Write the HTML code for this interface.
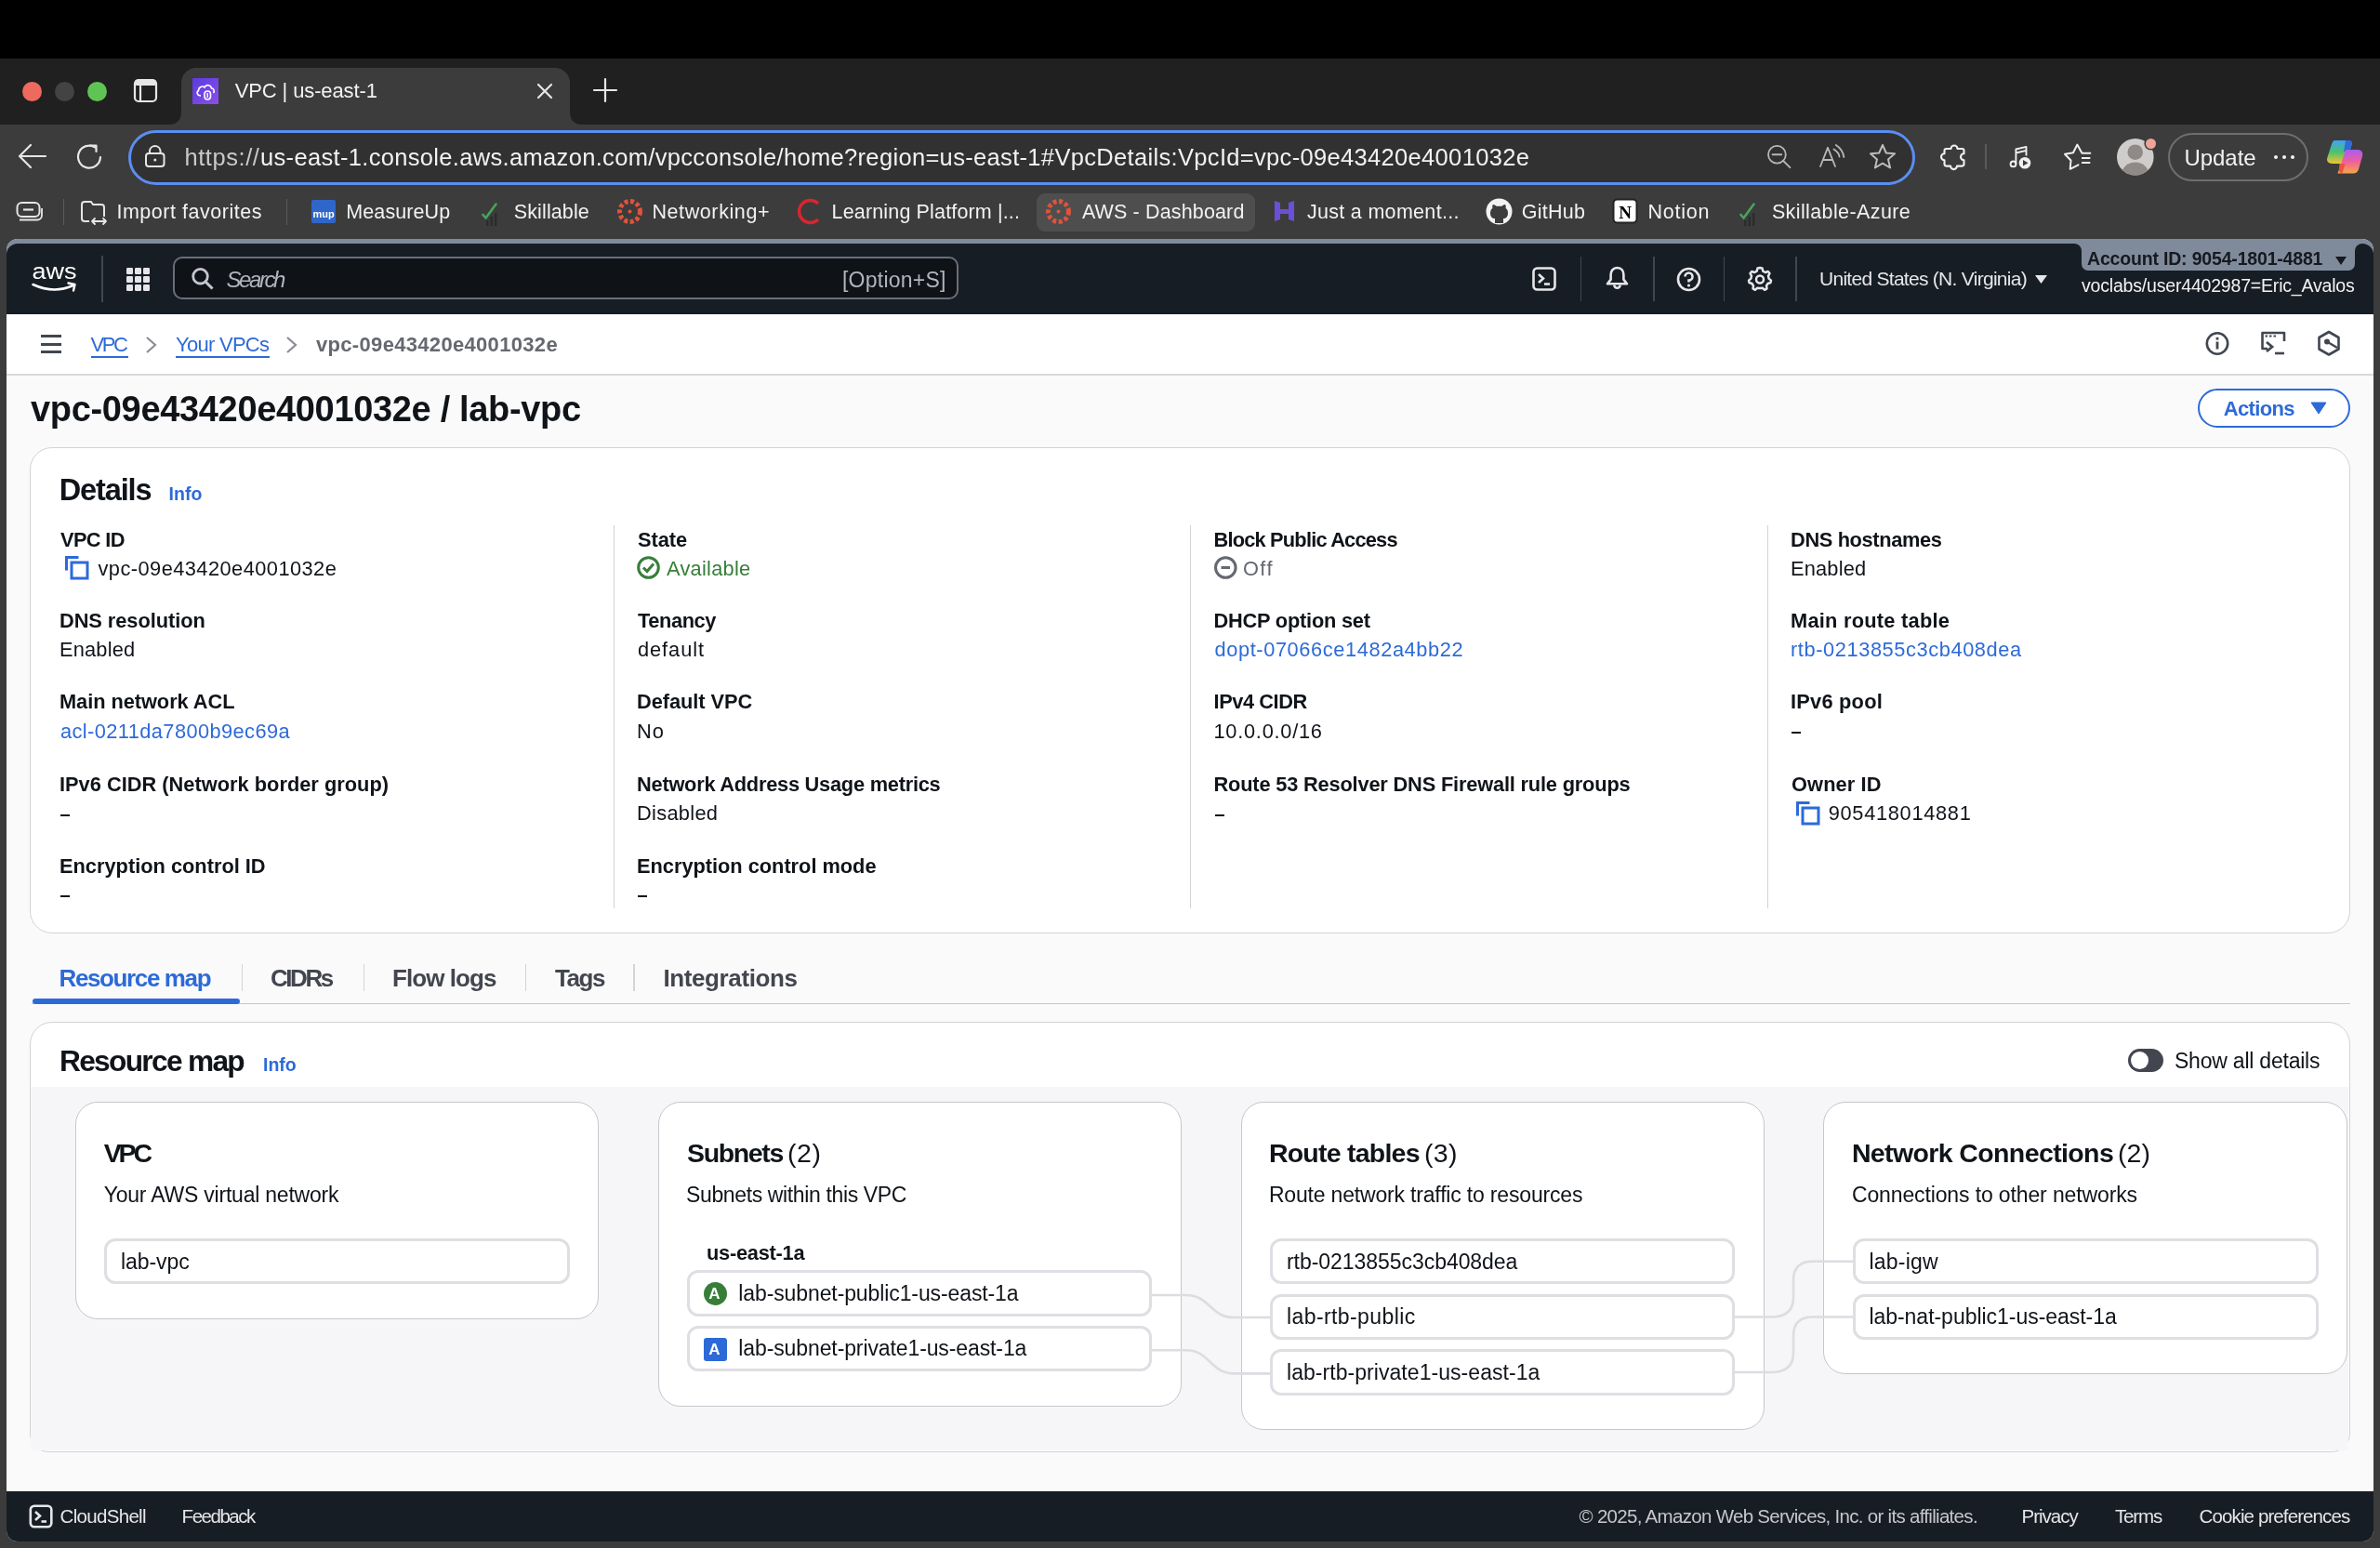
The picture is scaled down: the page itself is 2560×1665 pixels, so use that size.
<!DOCTYPE html>
<html><head><meta charset="utf-8"><title>VPC | us-east-1</title>
<style>
html,body{margin:0;padding:0;width:2560px;height:1665px;overflow:hidden;background:#3c3c3c;font-family:"Liberation Sans",sans-serif;}
svg{overflow:visible}
</style></head><body>
<div style="position:absolute;left:0;top:0;width:2560px;height:1665px;overflow:hidden;will-change:transform">
<div style="position:absolute;left:0.00px;top:0.00px;width:2560.00px;height:63.00px;background:#000"></div>
<div style="position:absolute;left:0.00px;top:63.00px;width:2560.00px;height:71.00px;background:#202020"></div>
<div style="position:absolute;left:0.00px;top:134.00px;width:2560.00px;height:1531.00px;background:#3c3c3c"></div>
<div style="position:absolute;left:195.00px;top:73.00px;width:418.00px;height:61.00px;background:#3c3c3c;border-radius:16px 16px 0 0"></div>
<svg style="position:absolute;left:181px;top:120px" width="14" height="14"><path d="M0 14 Q14 14 14 0 L14 14 Z" fill="#3c3c3c"/></svg>
<svg style="position:absolute;left:613px;top:120px" width="14" height="14"><path d="M14 14 Q0 14 0 0 L0 14 Z" fill="#3c3c3c"/></svg>
<div style="position:absolute;left:24.10px;top:87.80px;width:21.20px;height:21.20px;background:#ee6a5f;border-radius:50%"></div>
<div style="position:absolute;left:58.90px;top:87.80px;width:21.20px;height:21.20px;background:#434343;border-radius:50%"></div>
<div style="position:absolute;left:93.70px;top:87.80px;width:21.20px;height:21.20px;background:#5fc454;border-radius:50%"></div>
<svg style="position:absolute;left:143.00px;top:84.00px;" width="28" height="28" viewBox="0 0 28 28"><rect x="2" y="2" width="23" height="23" rx="4" fill="none" stroke="#e6e6e6" stroke-width="2.2"/><rect x="2" y="2" width="23" height="6" rx="2" fill="#e6e6e6"/><line x1="8" y1="8" x2="8" y2="25" stroke="#e6e6e6" stroke-width="2.2"/></svg>
<svg style="position:absolute;left:207.00px;top:84.00px;" width="28" height="28" viewBox="0 0 28 28"><defs><linearGradient id="fg" x1="0" y1="0" x2="1" y2="1"><stop offset="0" stop-color="#5a3be0"/><stop offset="1" stop-color="#8a4fe8"/></linearGradient></defs><rect width="28" height="28" fill="url(#fg)"/><path d="M9 19 C5 19 4 15 6.5 13.5 C6.5 9.5 11 8 13 10 C14.5 6.5 20 7 20.5 11 C23 11 24 14 22.5 16" fill="none" stroke="#fff" stroke-width="1.6"/><rect x="13" y="14" width="6.5" height="9" rx="3.2" fill="none" stroke="#fff" stroke-width="1.6"/><line x1="16.2" y1="16" x2="16.2" y2="21" stroke="#fff" stroke-width="1.4"/></svg>
<span style="position:absolute;left:252.70px;top:87px;font-size:22px;line-height:22px;color:#f2f2f2;white-space:pre;letter-spacing:-0.118px;">VPC | us-east-1</span>
<svg style="position:absolute;left:576.00px;top:88.00px;" width="20" height="20" viewBox="0 0 20 20"><path d="M3 3 L17 17 M17 3 L3 17" stroke="#e6e6e6" stroke-width="2.2" stroke-linecap="round"/></svg>
<svg style="position:absolute;left:638.00px;top:84.00px;" width="26" height="26" viewBox="0 0 26 26"><path d="M13 1 V25 M1 13 H25" stroke="#e6e6e6" stroke-width="2.2" stroke-linecap="round"/></svg>
<svg style="position:absolute;left:19.00px;top:154.00px;" width="32" height="28" viewBox="0 0 32 28"><path d="M30 14 H3 M14 2 L2 14 L14 26" fill="none" stroke="#e6e6e6" stroke-width="2.2" stroke-linecap="round" stroke-linejoin="round"/></svg>
<svg style="position:absolute;left:82.00px;top:154.00px;" width="32" height="32" viewBox="0 0 32 32"><path d="M26 15 A12 12 0 1 1 20.5 4.5" fill="none" stroke="#e6e6e6" stroke-width="2.2" stroke-linecap="round"/><path d="M15 2.5 H21.5 V9" fill="none" stroke="#e6e6e6" stroke-width="2.2" stroke-linecap="round" stroke-linejoin="round"/></svg>
<div style="position:absolute;left:138.00px;top:139.50px;width:1922.00px;height:59.00px;box-sizing:border-box;border:3.5px solid #5b8ef0;border-radius:30px;background:#313131"></div>
<svg style="position:absolute;left:155.00px;top:155.00px;" width="24" height="26" viewBox="0 0 24 26"><rect x="2" y="10" width="19.5" height="14" rx="3" fill="none" stroke="#e6e6e6" stroke-width="2"/><path d="M6 10 V7 A5.8 5.8 0 0 1 17.5 7 V10" fill="none" stroke="#e6e6e6" stroke-width="2"/><circle cx="11.8" cy="17" r="1.5" fill="#e6e6e6"/></svg>
<span style="position:absolute;left:198.50px;top:157px;font-size:25.5px;line-height:25.5px;color:#c9c9c9;white-space:pre;letter-spacing:0.550px;">https://</span>
<span style="position:absolute;left:280.00px;top:157px;font-size:25.5px;line-height:25.5px;color:#f2f2f2;white-space:pre;letter-spacing:0.328px;">us-east-1.console.aws.amazon.com/vpcconsole/home?region=us-east-1#VpcDetails:VpcId=vpc-09e43420e4001032e</span>
<svg style="position:absolute;left:1898.00px;top:153.00px;" width="30" height="30" viewBox="0 0 30 30"><circle cx="13.4" cy="13.2" r="9.4" fill="none" stroke="#b8b8b8" stroke-width="1.8"/><path d="M8.6 13.2 H18.2 M20 19.8 L27.4 27.2" stroke="#b8b8b8" stroke-width="1.9" stroke-linecap="round"/></svg>
<svg style="position:absolute;left:1950.00px;top:150.00px;" width="40" height="36" viewBox="0 0 40 36"><path d="M8 29 L16 8.8 L24 29 M11 22 H21" fill="none" stroke="#b8b8b8" stroke-width="1.8" stroke-linecap="round" stroke-linejoin="round"/><path d="M22.5 10.5 Q28 14 28.5 18.5 M24.8 6 Q32.5 11 33.3 19" fill="none" stroke="#b8b8b8" stroke-width="1.8" stroke-linecap="round"/></svg>
<svg style="position:absolute;left:2010.00px;top:154.00px;" width="30" height="30" viewBox="0 0 30 30"><path d="M15 2 L18.8 10.5 L28 11.3 L21 17.4 L23.1 26.5 L15 21.7 L6.9 26.5 L9 17.4 L2 11.3 L11.2 10.5 Z" fill="none" stroke="#bdbdbd" stroke-width="2" stroke-linejoin="round"/></svg>
<svg style="position:absolute;left:2086.00px;top:153.00px;" width="32" height="32" viewBox="0 0 32 32"><path d="M5.5 9 Q5.5 7 7.5 7 H12.5 A3.5 3.5 0 0 1 19.5 7 H24.5 Q26.5 7 26.5 9 V12.3 A3.5 3.5 0 0 0 26.5 19.3 V23.6 Q26.5 25.6 24.5 25.6 H19 A3.5 3.5 0 0 1 12 25.6 H7.5 Q5.5 25.6 5.5 23.6 V19.3 A3.5 3.5 0 0 1 5.5 12.3 Z" fill="none" stroke="#f0f0f0" stroke-width="2.1" stroke-linejoin="round"/></svg>
<div style="position:absolute;left:2135.00px;top:155.00px;width:2.00px;height:27.00px;background:#5a5a5a"></div>
<svg style="position:absolute;left:2158.00px;top:153.00px;" width="32" height="32" viewBox="0 0 32 32"><circle cx="7.5" cy="23.4" r="2.9" fill="none" stroke="#f0f0f0" stroke-width="1.9"/><path d="M10.4 23.4 V7.5 L21.5 4.9 V14.5 M10.4 11.5 L21.5 8.9" fill="none" stroke="#f0f0f0" stroke-width="1.9" stroke-linejoin="round"/><circle cx="20" cy="22.3" r="6.3" fill="#f0f0f0"/><path d="M18 19 V25.6 L23.5 22.3 Z" fill="#3c3c3c"/></svg>
<svg style="position:absolute;left:2218.00px;top:153.00px;" width="34" height="32" viewBox="0 0 34 32"><path d="M30.3 11.7 H21.5 L16.3 2.6 L12 11.2 L3 12.8 L9.5 19.5 L8.7 28.8 L17.5 24.3" fill="none" stroke="#f0f0f0" stroke-width="2" stroke-linejoin="round" stroke-linecap="round"/><path d="M21 17 H30.3 M21 21.9 H30.3" stroke="#f0f0f0" stroke-width="2"/></svg>
<svg style="position:absolute;left:2277.30px;top:149.10px;" width="40" height="40" viewBox="0 0 40 40"><defs><clipPath id="avc"><circle cx="19.8" cy="19.8" r="19.8"/></clipPath></defs><circle cx="19.8" cy="19.8" r="19.8" fill="#cfcdcb"/><g clip-path="url(#avc)"><circle cx="19.7" cy="14.7" r="8.3" fill="#8f8a87"/><ellipse cx="19.7" cy="38" rx="14.5" ry="12.5" fill="#8f8a87"/></g></svg>
<div style="position:absolute;left:2307.80px;top:148.90px;width:11.00px;height:11.00px;background:#f0a39b;border-radius:50%;box-shadow:0 0 0 1.6px #3c3c3c"></div>
<div style="position:absolute;left:2332.10px;top:143.00px;width:150.90px;height:51.60px;box-sizing:border-box;border:2px solid #6e6e6e;border-radius:26px"></div>
<span style="position:absolute;left:2349.40px;top:158px;font-size:24px;line-height:24px;color:#f2f2f2;white-space:pre;letter-spacing:-0.029px;">Update</span>
<div style="position:absolute;left:2445.60px;top:166.60px;width:4.60px;height:4.60px;background:#f2f2f2;border-radius:50%"></div>
<div style="position:absolute;left:2454.80px;top:166.60px;width:4.60px;height:4.60px;background:#f2f2f2;border-radius:50%"></div>
<div style="position:absolute;left:2463.80px;top:166.60px;width:4.60px;height:4.60px;background:#f2f2f2;border-radius:50%"></div>
<svg style="position:absolute;left:2501.00px;top:150.00px;" width="42" height="38" viewBox="0 0 42 38"><defs><linearGradient id="cpa" x1="0" y1="0" x2="0" y2="1"><stop offset="0" stop-color="#3fa2f6"/><stop offset="0.5" stop-color="#4cc26c"/><stop offset="1" stop-color="#f5c431"/></linearGradient><linearGradient id="cpb" x1="0" y1="0" x2="0" y2="1"><stop offset="0" stop-color="#a85cf2"/><stop offset="0.5" stop-color="#ef5f9c"/><stop offset="1" stop-color="#f7a744"/></linearGradient></defs><path d="M10 1 H25 C28 1 29.5 3 28.5 6 L22 26 H8 C3 26 1 23 2.5 19 L7 5 C8 2.5 9 1 10 1 Z" fill="url(#cpa)"/><path d="M22 1 H25 C28 1 29.5 3 28.5 6 L26 13 H20 Z" fill="#2c5fde" opacity="0.85"/><path d="M14 36.5 H30 C33 36.5 35 35 36 32 L40 18 C41 14 39 11 35 11 H22 L15.5 31 C14.5 34 13 36.5 14 36.5 Z" fill="url(#cpb)"/><path d="M15.5 26 H21.5 L18.5 36.3 C16.5 36.5 14.8 35 14.8 32 Z" fill="#e8553a"/></svg>
<svg style="position:absolute;left:17.00px;top:216.00px;" width="30" height="24" viewBox="0 0 30 24"><rect x="1.5" y="2" width="24" height="15" rx="5" fill="none" stroke="#e6e6e6" stroke-width="2"/><path d="M8 9.5 H19" stroke="#e6e6e6" stroke-width="2.2"/><path d="M4 20.5 H23 A5 5 0 0 0 28 15.5 V8" fill="none" stroke="#e6e6e6" stroke-width="1.8"/></svg>
<div style="position:absolute;left:67.50px;top:214.00px;width:1.50px;height:28.00px;background:#5a5a5a"></div>
<svg style="position:absolute;left:86.00px;top:213.00px;" width="32" height="30" viewBox="0 0 32 30"><path d="M2 7 V22 A3 3 0 0 0 5 25 H10 M26 20 V10 A3 3 0 0 0 23 7 H14 L12 4 H5 A3 3 0 0 0 2 7" fill="none" stroke="#e6e6e6" stroke-width="2" stroke-linejoin="round"/><path d="M13 25 H28 M16 22 L13 25 L16 28 M25 22 L28 25 L25 28" fill="none" stroke="#e6e6e6" stroke-width="1.8" stroke-linecap="round" stroke-linejoin="round"/></svg>
<span style="position:absolute;left:125.40px;top:218px;font-size:21.5px;line-height:21.5px;color:#f2f2f2;white-space:pre;letter-spacing:0.533px;">Import favorites</span>
<div style="position:absolute;left:307.70px;top:214.00px;width:1.50px;height:28.00px;background:#5a5a5a"></div>
<svg style="position:absolute;left:335.00px;top:215.00px;" width="26" height="25" viewBox="0 0 26 25"><rect width="26" height="25" rx="2" fill="#2f66c9"/><text x="13" y="19" font-family="Liberation Sans" font-size="11" font-weight="bold" fill="#fff" text-anchor="middle">mup</text></svg>
<span style="position:absolute;left:372.30px;top:218px;font-size:21.5px;line-height:21.5px;color:#f2f2f2;white-space:pre;letter-spacing:0.091px;">MeasureUp</span>
<svg style="position:absolute;left:517.00px;top:216.00px;" width="22" height="28" viewBox="0 0 22 28"><path d="M2.5 15 L5.5 18.5 L16.5 3.5" fill="none" stroke="#4aa35c" stroke-width="2.6" stroke-linecap="round" stroke-linejoin="round"/><rect x="6" y="21" width="2.5" height="6" fill="#2c2c2c"/><rect x="10.5" y="17" width="2.5" height="10" fill="#2c2c2c"/><rect x="15" y="13" width="2.5" height="14" fill="#2c2c2c"/></svg>
<span style="position:absolute;left:552.80px;top:218px;font-size:21.5px;line-height:21.5px;color:#f2f2f2;white-space:pre;letter-spacing:0.111px;">Skillable</span>
<svg style="position:absolute;left:663.00px;top:213.00px;" width="29" height="29" viewBox="0 0 29 29"><circle cx="14.5" cy="14.5" r="11" fill="none" stroke="#e0533b" stroke-width="5" stroke-dasharray="4 2.5"/><circle cx="14.5" cy="14.5" r="2" fill="#e0533b"/></svg>
<span style="position:absolute;left:701.40px;top:218px;font-size:21.5px;line-height:21.5px;color:#f2f2f2;white-space:pre;letter-spacing:0.606px;">Networking+</span>
<svg style="position:absolute;left:856.00px;top:213.00px;" width="29" height="29" viewBox="0 0 29 29"><path d="M24 6 A12 12 0 1 0 24 23" fill="none" stroke="#d8262f" stroke-width="3.4"/></svg>
<span style="position:absolute;left:894.60px;top:218px;font-size:21.5px;line-height:21.5px;color:#f2f2f2;white-space:pre;letter-spacing:0.152px;">Learning Platform |...</span>
<div style="position:absolute;left:1114.70px;top:207.60px;width:235.30px;height:41.20px;background:#4e4e4e;border-radius:9px"></div>
<svg style="position:absolute;left:1124.00px;top:213.00px;" width="29" height="29" viewBox="0 0 29 29"><circle cx="14.5" cy="14.5" r="11" fill="none" stroke="#e0533b" stroke-width="5" stroke-dasharray="4 2.5"/><circle cx="14.5" cy="14.5" r="2" fill="#e0533b"/></svg>
<span style="position:absolute;left:1163.90px;top:218px;font-size:21.5px;line-height:21.5px;color:#f2f2f2;white-space:pre;letter-spacing:0.143px;">AWS - Dashboard</span>
<svg style="position:absolute;left:1369.00px;top:214.00px;" width="25" height="26" viewBox="0 0 25 26"><path d="M2 2 L8 4 V11 L17 11 V4 L23 2 V24 L17 22 V16 L8 16 V22 L2 24 Z" fill="#6b4fd8"/></svg>
<span style="position:absolute;left:1405.90px;top:218px;font-size:21.5px;line-height:21.5px;color:#f2f2f2;white-space:pre;letter-spacing:0.310px;">Just a moment...</span>
<svg style="position:absolute;left:1598.00px;top:213.00px;" width="29" height="29" viewBox="0 0 29 29"><circle cx="14.5" cy="14.5" r="14" fill="#f2f2f2"/><path d="M10 27 V22 C7 22 5 20 5 16 C5 13 6.5 11.5 7.5 11 C7 9.5 7.2 8 8 7 C9.5 7 11 8 12 9 C13.5 8.6 15.5 8.6 17 9 C18 8 19.5 7 21 7 C21.8 8 22 9.5 21.5 11 C22.5 11.5 24 13 24 16 C24 20 22 22 19 22 V27 Z" fill="#3c3c3c"/></svg>
<span style="position:absolute;left:1636.80px;top:218px;font-size:21.5px;line-height:21.5px;color:#f2f2f2;white-space:pre;letter-spacing:0.249px;">GitHub</span>
<svg style="position:absolute;left:1734.00px;top:213.00px;" width="28" height="28" viewBox="0 0 28 28"><rect x="1.5" y="1.5" width="25" height="25" rx="4" fill="#fff" stroke="#222" stroke-width="2"/><text x="14" y="22" font-family="Liberation Serif" font-size="19" font-weight="bold" fill="#000" text-anchor="middle">N</text></svg>
<span style="position:absolute;left:1772.50px;top:218px;font-size:21.5px;line-height:21.5px;color:#f2f2f2;white-space:pre;letter-spacing:0.742px;">Notion</span>
<svg style="position:absolute;left:1870.00px;top:216.00px;" width="22" height="28" viewBox="0 0 22 28"><path d="M2.5 15 L5.5 18.5 L16.5 3.5" fill="none" stroke="#4aa35c" stroke-width="2.6" stroke-linecap="round" stroke-linejoin="round"/><rect x="6" y="21" width="2.5" height="6" fill="#2c2c2c"/><rect x="10.5" y="17" width="2.5" height="10" fill="#2c2c2c"/><rect x="15" y="13" width="2.5" height="14" fill="#2c2c2c"/></svg>
<span style="position:absolute;left:1905.90px;top:218px;font-size:21.5px;line-height:21.5px;color:#f2f2f2;white-space:pre;letter-spacing:0.390px;">Skillable-Azure</span>
<div style="position:absolute;left:7.00px;top:257.00px;width:2546.00px;height:1401.00px;background:#fafafa;border-radius:12px;overflow:hidden"></div>
<div style="position:absolute;left:7.00px;top:257.00px;width:2546.00px;height:23.00px;background:#7f8b9a;border-radius:12px 12px 0 0"></div>
<div style="position:absolute;left:7.00px;top:262.00px;width:2232.00px;height:76.00px;background:#171d25;border-radius:12px 8px 0 0"></div>
<div style="position:absolute;left:2533.00px;top:262.00px;width:20.00px;height:76.00px;background:#171d25;border-radius:8px 12px 0 0"></div>
<div style="position:absolute;left:2232.00px;top:280.00px;width:307.00px;height:58.00px;background:#171d25"></div>
<div style="position:absolute;left:2238.60px;top:257.00px;width:294.30px;height:34.00px;background:#7f8b9a;border-radius:0 0 7px 7px"></div>
<svg style="position:absolute;left:33.00px;top:282.00px;" width="52" height="36" viewBox="0 0 52 36"><text x="1.5" y="17.5" font-family="Liberation Sans" font-size="24.5" fill="#fff" textLength="48" lengthAdjust="spacingAndGlyphs">aws</text><path d="M2.5 24 Q25 34.5 45.5 25" fill="none" stroke="#fff" stroke-width="2.6" stroke-linecap="round"/><path d="M40.5 22.5 L47.5 24 L46 30.5" fill="none" stroke="#fff" stroke-width="2.4" stroke-linecap="round" stroke-linejoin="round"/></svg>
<div style="position:absolute;left:109.00px;top:275.40px;width:1.50px;height:49.40px;background:#414750"></div>
<svg style="position:absolute;left:135.00px;top:287.00px;" width="26" height="26" viewBox="0 0 26 26"><rect x="1" y="1" width="7" height="7" rx="1.2" fill="#e6e6ea"/><rect x="1" y="10" width="7" height="7" rx="1.2" fill="#e6e6ea"/><rect x="1" y="19" width="7" height="7" rx="1.2" fill="#e6e6ea"/><rect x="10" y="1" width="7" height="7" rx="1.2" fill="#e6e6ea"/><rect x="10" y="10" width="7" height="7" rx="1.2" fill="#e6e6ea"/><rect x="10" y="19" width="7" height="7" rx="1.2" fill="#e6e6ea"/><rect x="19" y="1" width="7" height="7" rx="1.2" fill="#e6e6ea"/><rect x="19" y="10" width="7" height="7" rx="1.2" fill="#e6e6ea"/><rect x="19" y="19" width="7" height="7" rx="1.2" fill="#e6e6ea"/></svg>
<div style="position:absolute;left:186.00px;top:275.80px;width:845.00px;height:46.20px;box-sizing:border-box;border:2px solid #6a6e78;border-radius:10px;background:#0f1318"></div>
<svg style="position:absolute;left:205.00px;top:287.00px;" width="28" height="28" viewBox="0 0 28 28"><circle cx="10.5" cy="10.2" r="7.8" fill="none" stroke="#c6c6cd" stroke-width="2.8"/><path d="M16 16 L22.5 22.5" stroke="#c6c6cd" stroke-width="3" stroke-linecap="square"/></svg>
<span style="position:absolute;left:243.50px;top:289px;font-size:24px;line-height:24px;color:#b4b4bb;white-space:pre;font-style:italic;letter-spacing:-2.439px;">Search</span>
<span style="position:absolute;left:906.00px;top:290px;font-size:23px;line-height:23px;color:#b4b4bb;white-space:pre;letter-spacing:0.230px;">[Option+S]</span>
<svg style="position:absolute;left:1648.00px;top:287.00px;" width="27" height="27" viewBox="0 0 27 27"><rect x="1.5" y="1.5" width="23" height="23" rx="4" fill="none" stroke="#e6e6ea" stroke-width="2.6"/><path d="M7 8 L12 12.5 L7 17" fill="none" stroke="#e6e6ea" stroke-width="2.6"/><path d="M13 18.5 H19" stroke="#e6e6ea" stroke-width="2.6"/></svg>
<div style="position:absolute;left:1699.85px;top:275.50px;width:1.50px;height:48.50px;background:#414750"></div>
<div style="position:absolute;left:1778.25px;top:275.50px;width:1.50px;height:48.50px;background:#414750"></div>
<div style="position:absolute;left:1853.95px;top:275.50px;width:1.50px;height:48.50px;background:#414750"></div>
<div style="position:absolute;left:1931.05px;top:275.50px;width:1.50px;height:48.50px;background:#414750"></div>
<svg style="position:absolute;left:1726.00px;top:285.00px;" width="27" height="29" viewBox="0 0 27 29"><path d="M13.5 3 C8.8 3 6.6 6.8 6.6 10.6 V15.6 L3 20.3 H24 L20.4 15.6 V10.6 C20.4 6.8 18.2 3 13.5 3Z" fill="none" stroke="#e6e6ea" stroke-width="2.6" stroke-linejoin="round"/><path d="M10.3 21.6 A3.2 3.2 0 0 0 16.7 21.6" fill="none" stroke="#e6e6ea" stroke-width="2.6"/></svg>
<svg style="position:absolute;left:1803.00px;top:287.00px;" width="27" height="27" viewBox="0 0 27 27"><circle cx="13.5" cy="13.5" r="11.5" fill="none" stroke="#e6e6ea" stroke-width="2.6"/><path d="M9.5 10.5 A4 4 0 1 1 13.5 14.5 V16.5" fill="none" stroke="#e6e6ea" stroke-width="2.6"/><circle cx="13.5" cy="20" r="1.6" fill="#e6e6ea"/></svg>
<svg style="position:absolute;left:1879.00px;top:286.00px;" width="28" height="28" viewBox="0 0 28 28"><path d="M14 2 L16.5 2.5 L17.3 5.6 L19.8 7 L22.8 6 L24.5 8 L23 10.8 L23.6 13.6 L26 15.6 L25.5 18 L22.5 19 L21 21.5 L21.5 24.5 L19.2 25.8 L16.8 23.8 L14 24 L11.2 23.8 L8.8 25.8 L6.5 24.5 L7 21.5 L5.5 19 L2.5 18 L2 15.6 L4.4 13.6 L5 10.8 L3.5 8 L5.2 6 L8.2 7 L10.7 5.6 L11.5 2.5 Z" fill="none" stroke="#e6e6ea" stroke-width="2.5" stroke-linejoin="round"/><circle cx="14" cy="14.5" r="4" fill="none" stroke="#e6e6ea" stroke-width="2.5"/></svg>
<span style="position:absolute;left:1957.00px;top:289px;font-size:21px;line-height:21px;color:#e6e6ea;white-space:pre;letter-spacing:-0.719px;">United States (N. Virginia)</span>
<svg style="position:absolute;left:2188.00px;top:295.00px;" width="15" height="11" viewBox="0 0 15 11"><path d="M1 1 H14 L7.5 10 Z" fill="#e6e6ea"/></svg>
<span style="position:absolute;left:2245.00px;top:269px;font-size:19.5px;line-height:19.5px;color:#16191f;white-space:pre;font-weight:bold;letter-spacing:-0.180px;">Account ID: 9054-1801-4881</span>
<svg style="position:absolute;left:2511.00px;top:275.00px;" width="14" height="11" viewBox="0 0 14 11"><path d="M1 1 H13 L7 10 Z" fill="#16191f"/></svg>
<span style="position:absolute;left:2239.00px;top:298px;font-size:19.5px;line-height:19.5px;color:#f2f2f2;white-space:pre;letter-spacing:-0.187px;">voclabs/user4402987=Eric_Avalos</span>
<div style="position:absolute;left:7.00px;top:338.00px;width:2546.00px;height:64.00px;background:#fff"></div>
<div style="position:absolute;left:7.00px;top:402.00px;width:2546.00px;height:1.50px;background:#d8d8dd"></div>
<div style="position:absolute;left:44.00px;top:360.00px;width:22.00px;height:3.00px;background:#414750"></div>
<div style="position:absolute;left:44.00px;top:368.50px;width:22.00px;height:3.00px;background:#414750"></div>
<div style="position:absolute;left:44.00px;top:377.00px;width:22.00px;height:3.00px;background:#414750"></div>
<span style="position:absolute;left:97.60px;top:360px;font-size:22px;line-height:22px;color:#2d6ad8;white-space:pre;letter-spacing:-2.474px;">VPC</span>
<div style="position:absolute;left:97.60px;top:383.00px;width:40.40px;height:2.00px;background:#2d6ad8"></div>
<svg style="position:absolute;left:155.00px;top:361.00px;" width="16" height="20" viewBox="0 0 16 20"><path d="M3 2 L12 10 L3 18" fill="none" stroke="#8c8c94" stroke-width="2.2"/></svg>
<span style="position:absolute;left:189.00px;top:360px;font-size:22px;line-height:22px;color:#2d6ad8;white-space:pre;letter-spacing:-0.725px;">Your VPCs</span>
<div style="position:absolute;left:189.00px;top:383.00px;width:101.00px;height:2.00px;background:#2d6ad8"></div>
<svg style="position:absolute;left:306.00px;top:361.00px;" width="16" height="20" viewBox="0 0 16 20"><path d="M3 2 L12 10 L3 18" fill="none" stroke="#8c8c94" stroke-width="2.2"/></svg>
<span style="position:absolute;left:340.00px;top:360px;font-size:22px;line-height:22px;color:#666870;white-space:pre;font-weight:bold;letter-spacing:0.320px;">vpc-09e43420e4001032e</span>
<svg style="position:absolute;left:2371.00px;top:356.00px;" width="28" height="28" viewBox="0 0 28 28"><circle cx="14" cy="13.5" r="11.2" fill="none" stroke="#414750" stroke-width="2.6"/><path d="M14 11.5 V19.5" stroke="#414750" stroke-width="2.8"/><rect x="12.6" y="6.8" width="2.8" height="2.8" fill="#414750"/></svg>
<svg style="position:absolute;left:2430.00px;top:355.00px;" width="30" height="30" viewBox="0 0 30 30"><path d="M9 20 H3.5 V3 H27 V12" fill="none" stroke="#414750" stroke-width="2.6" stroke-linejoin="round"/><path d="M6.5 6.5 H9 M11 6.5 H13.5 M15.5 6.5 H18" stroke="#414750" stroke-width="2.2"/><path d="M8 13 L14 18 L8 23" fill="none" stroke="#414750" stroke-width="2.8"/><path d="M17 25 H27" stroke="#414750" stroke-width="2.6"/></svg>
<svg style="position:absolute;left:2492.00px;top:355.00px;" width="26" height="29" viewBox="0 0 26 29"><path d="M13 2 L23.5 8 V20.5 L13 26.5 L2.5 20.5 V8 Z" fill="none" stroke="#414750" stroke-width="2.6" stroke-linejoin="round"/><circle cx="11" cy="12.5" r="3" fill="#414750"/><path d="M11 12.5 L22 19" stroke="#414750" stroke-width="2.4"/></svg>
<span style="position:absolute;left:33.00px;top:421px;font-size:38px;line-height:38px;color:#101419;white-space:pre;font-weight:bold;letter-spacing:-0.333px;">vpc-09e43420e4001032e / lab-vpc</span>
<div style="position:absolute;left:2364.00px;top:418.00px;width:163.60px;height:42.00px;box-sizing:border-box;border:2.2px solid #2d6ad8;border-radius:22px;background:#fff"></div>
<span style="position:absolute;left:2391.80px;top:429px;font-size:22px;line-height:22px;color:#2d6ad8;white-space:pre;font-weight:bold;letter-spacing:-0.656px;">Actions</span>
<svg style="position:absolute;left:2485.00px;top:432.00px;" width="18" height="14" viewBox="0 0 18 14"><path d="M1 1 H17 L9 13 Z" fill="#2d6ad8" stroke="#2d6ad8" stroke-width="1" stroke-linejoin="round"/></svg>
<div style="position:absolute;left:32.00px;top:481.00px;width:2495.50px;height:522.50px;box-sizing:border-box;border:1.3px solid #d3d3d8;border-radius:24px;background:#fff"></div>
<span style="position:absolute;left:63.70px;top:511px;font-size:32.5px;line-height:32.5px;color:#101419;white-space:pre;font-weight:bold;letter-spacing:-1.117px;">Details</span>
<span style="position:absolute;left:181.60px;top:522px;font-size:19.5px;line-height:19.5px;color:#2d6ad8;white-space:pre;font-weight:bold;letter-spacing:0.059px;">Info</span>
<div style="position:absolute;left:659.90px;top:565.00px;width:1.20px;height:412.00px;background:#d3d3d8"></div>
<div style="position:absolute;left:1279.90px;top:565.00px;width:1.20px;height:412.00px;background:#d3d3d8"></div>
<div style="position:absolute;left:1900.90px;top:565.00px;width:1.20px;height:412.00px;background:#d3d3d8"></div>
<span style="position:absolute;left:65.00px;top:570px;font-size:21.8px;line-height:21.8px;color:#101419;white-space:pre;font-weight:bold;letter-spacing:-0.646px;">VPC ID</span>
<span style="position:absolute;left:105.50px;top:601px;font-size:21.8px;line-height:21.8px;color:#101419;white-space:pre;letter-spacing:0.453px;">vpc-09e43420e4001032e</span>
<svg style="position:absolute;left:70.00px;top:598.00px;" width="26" height="26" viewBox="0 0 26 26"><path d="M1.5 15.5 V1.5 H14.5" fill="none" stroke="#2d6ad8" stroke-width="3"/><rect x="7" y="7" width="17" height="17" fill="none" stroke="#2d6ad8" stroke-width="3"/></svg>
<span style="position:absolute;left:64.00px;top:657px;font-size:21.8px;line-height:21.8px;color:#101419;white-space:pre;font-weight:bold;letter-spacing:-0.055px;">DNS resolution</span>
<span style="position:absolute;left:64.00px;top:688px;font-size:21.8px;line-height:21.8px;color:#101419;white-space:pre;letter-spacing:0.188px;">Enabled</span>
<span style="position:absolute;left:64.00px;top:744px;font-size:21.8px;line-height:21.8px;color:#101419;white-space:pre;font-weight:bold;letter-spacing:-0.054px;">Main network ACL</span>
<span style="position:absolute;left:65.00px;top:776px;font-size:21.8px;line-height:21.8px;color:#2d6ad8;white-space:pre;letter-spacing:0.413px;">acl-0211da7800b9ec69a</span>
<span style="position:absolute;left:64.00px;top:833px;font-size:21.8px;line-height:21.8px;color:#101419;white-space:pre;font-weight:bold;letter-spacing:0.011px;">IPv6 CIDR (Network border group)</span>
<div style="position:absolute;left:65.00px;top:875.50px;width:10.30px;height:2.30px;background:#101419"></div>
<span style="position:absolute;left:64.00px;top:921px;font-size:21.8px;line-height:21.8px;color:#101419;white-space:pre;font-weight:bold;">Encryption control ID</span>
<div style="position:absolute;left:65.00px;top:963.10px;width:10.30px;height:2.30px;background:#101419"></div>
<span style="position:absolute;left:686.00px;top:570px;font-size:21.8px;line-height:21.8px;color:#101419;white-space:pre;font-weight:bold;letter-spacing:-0.044px;">State</span>
<span style="position:absolute;left:717.00px;top:601px;font-size:21.8px;line-height:21.8px;color:#377e39;white-space:pre;letter-spacing:0.258px;">Available</span>
<svg style="position:absolute;left:685.00px;top:598.00px;" width="26" height="26" viewBox="0 0 26 26"><circle cx="12.5" cy="12.5" r="10.8" fill="none" stroke="#377e39" stroke-width="3"/><path d="M7 12.5 L11 16.5 L18 8.5" fill="none" stroke="#377e39" stroke-width="3"/></svg>
<span style="position:absolute;left:686.00px;top:657px;font-size:21.8px;line-height:21.8px;color:#101419;white-space:pre;font-weight:bold;letter-spacing:-0.399px;">Tenancy</span>
<span style="position:absolute;left:686.00px;top:688px;font-size:21.8px;line-height:21.8px;color:#101419;white-space:pre;letter-spacing:0.935px;">default</span>
<span style="position:absolute;left:685.00px;top:744px;font-size:21.8px;line-height:21.8px;color:#101419;white-space:pre;font-weight:bold;letter-spacing:-0.041px;">Default VPC</span>
<span style="position:absolute;left:685.00px;top:776px;font-size:21.8px;line-height:21.8px;color:#101419;white-space:pre;letter-spacing:1.059px;">No</span>
<span style="position:absolute;left:685.00px;top:833px;font-size:21.8px;line-height:21.8px;color:#101419;white-space:pre;font-weight:bold;letter-spacing:-0.244px;">Network Address Usage metrics</span>
<span style="position:absolute;left:685.00px;top:864px;font-size:21.8px;line-height:21.8px;color:#101419;white-space:pre;letter-spacing:0.301px;">Disabled</span>
<span style="position:absolute;left:685.00px;top:921px;font-size:21.8px;line-height:21.8px;color:#101419;white-space:pre;font-weight:bold;letter-spacing:-0.019px;">Encryption control mode</span>
<div style="position:absolute;left:686.00px;top:963.10px;width:10.30px;height:2.30px;background:#101419"></div>
<span style="position:absolute;left:1305.50px;top:570px;font-size:21.8px;line-height:21.8px;color:#101419;white-space:pre;font-weight:bold;letter-spacing:-0.800px;">Block Public Access</span>
<span style="position:absolute;left:1336.90px;top:601px;font-size:21.8px;line-height:21.8px;color:#666870;white-space:pre;letter-spacing:1.492px;">Off</span>
<svg style="position:absolute;left:1306.00px;top:598.00px;" width="26" height="26" viewBox="0 0 26 26"><circle cx="12.3" cy="12.5" r="10.8" fill="none" stroke="#666870" stroke-width="3"/><path d="M7.5 12.5 H17" stroke="#666870" stroke-width="3"/></svg>
<span style="position:absolute;left:1305.50px;top:657px;font-size:21.8px;line-height:21.8px;color:#101419;white-space:pre;font-weight:bold;letter-spacing:-0.221px;">DHCP option set</span>
<span style="position:absolute;left:1306.50px;top:688px;font-size:21.8px;line-height:21.8px;color:#2d6ad8;white-space:pre;letter-spacing:0.599px;">dopt-07066ce1482a4bb22</span>
<span style="position:absolute;left:1305.50px;top:744px;font-size:21.8px;line-height:21.8px;color:#101419;white-space:pre;font-weight:bold;letter-spacing:-0.429px;">IPv4 CIDR</span>
<span style="position:absolute;left:1305.50px;top:776px;font-size:21.8px;line-height:21.8px;color:#101419;white-space:pre;letter-spacing:0.734px;">10.0.0.0/16</span>
<span style="position:absolute;left:1305.50px;top:833px;font-size:21.8px;line-height:21.8px;color:#101419;white-space:pre;font-weight:bold;letter-spacing:-0.178px;">Route 53 Resolver DNS Firewall rule groups</span>
<div style="position:absolute;left:1306.50px;top:875.50px;width:10.30px;height:2.30px;background:#101419"></div>
<span style="position:absolute;left:1926.00px;top:570px;font-size:21.8px;line-height:21.8px;color:#101419;white-space:pre;font-weight:bold;letter-spacing:-0.361px;">DNS hostnames</span>
<span style="position:absolute;left:1926.00px;top:601px;font-size:21.8px;line-height:21.8px;color:#101419;white-space:pre;letter-spacing:0.188px;">Enabled</span>
<span style="position:absolute;left:1926.00px;top:657px;font-size:21.8px;line-height:21.8px;color:#101419;white-space:pre;font-weight:bold;letter-spacing:0.253px;">Main route table</span>
<span style="position:absolute;left:1926.00px;top:688px;font-size:21.8px;line-height:21.8px;color:#2d6ad8;white-space:pre;letter-spacing:0.590px;">rtb-0213855c3cb408dea</span>
<span style="position:absolute;left:1926.00px;top:744px;font-size:21.8px;line-height:21.8px;color:#101419;white-space:pre;font-weight:bold;letter-spacing:0.233px;">IPv6 pool</span>
<div style="position:absolute;left:1927.00px;top:787.00px;width:10.30px;height:2.30px;background:#101419"></div>
<span style="position:absolute;left:1927.00px;top:833px;font-size:21.8px;line-height:21.8px;color:#101419;white-space:pre;font-weight:bold;letter-spacing:0.123px;">Owner ID</span>
<span style="position:absolute;left:1966.70px;top:864px;font-size:21.8px;line-height:21.8px;color:#101419;white-space:pre;letter-spacing:0.696px;">905418014881</span>
<svg style="position:absolute;left:1931.50px;top:862.00px;" width="26" height="26" viewBox="0 0 26 26"><path d="M1.5 15.5 V1.5 H14.5" fill="none" stroke="#2d6ad8" stroke-width="3"/><rect x="7" y="7" width="17" height="17" fill="none" stroke="#2d6ad8" stroke-width="3"/></svg>
<span style="position:absolute;left:63.50px;top:1039px;font-size:26px;line-height:26px;color:#2d6ad8;white-space:pre;font-weight:bold;letter-spacing:-1.373px;">Resource map</span>
<span style="position:absolute;left:291.00px;top:1039px;font-size:26px;line-height:26px;color:#43464f;white-space:pre;font-weight:bold;letter-spacing:-2.438px;">CIDRs</span>
<span style="position:absolute;left:422.00px;top:1039px;font-size:26px;line-height:26px;color:#43464f;white-space:pre;font-weight:bold;letter-spacing:-0.928px;">Flow logs</span>
<span style="position:absolute;left:597.00px;top:1039px;font-size:26px;line-height:26px;color:#43464f;white-space:pre;font-weight:bold;letter-spacing:-1.431px;">Tags</span>
<span style="position:absolute;left:713.40px;top:1039px;font-size:26px;line-height:26px;color:#43464f;white-space:pre;font-weight:bold;letter-spacing:-0.384px;">Integrations</span>
<div style="position:absolute;left:259.80px;top:1036.50px;width:1.20px;height:29.50px;background:#d3d3d8"></div>
<div style="position:absolute;left:391.00px;top:1036.50px;width:1.20px;height:29.50px;background:#d3d3d8"></div>
<div style="position:absolute;left:564.80px;top:1036.50px;width:1.20px;height:29.50px;background:#d3d3d8"></div>
<div style="position:absolute;left:681.40px;top:1036.50px;width:1.20px;height:29.50px;background:#d3d3d8"></div>
<div style="position:absolute;left:34.00px;top:1079.00px;width:2493.50px;height:1.30px;background:#c6c6cc"></div>
<div style="position:absolute;left:35.00px;top:1073.50px;width:223.20px;height:6.00px;background:#2d6ad8;border-radius:3px"></div>
<div style="position:absolute;left:32.00px;top:1099.00px;width:2495.50px;height:463.00px;box-sizing:border-box;border:1.3px solid #d3d3d8;border-radius:24px 24px 20px 20px;background:#fff"></div>
<div style="position:absolute;left:33.30px;top:1168.70px;width:2492.90px;height:391.60px;background:#f6f6f9"></div>
<span style="position:absolute;left:64.00px;top:1126px;font-size:31.7px;line-height:31.7px;color:#101419;white-space:pre;font-weight:bold;letter-spacing:-1.702px;">Resource map</span>
<span style="position:absolute;left:283.00px;top:1136px;font-size:19.5px;line-height:19.5px;color:#2d6ad8;white-space:pre;font-weight:bold;">Info</span>
<div style="position:absolute;left:2289.00px;top:1127.50px;width:37.80px;height:25.50px;background:#43464f;border-radius:13px"></div>
<div style="position:absolute;left:2292.10px;top:1130.60px;width:19.00px;height:19.00px;background:#fff;border-radius:50%"></div>
<span style="position:absolute;left:2339.00px;top:1130px;font-size:23px;line-height:23px;color:#101419;white-space:pre;letter-spacing:-0.221px;">Show all details</span>
<div style="position:absolute;left:80.70px;top:1184.60px;width:563.70px;height:234.20px;box-sizing:border-box;border:1.6px solid #c6c6cc;border-radius:24px;background:#fff"></div>
<span style="position:absolute;left:111.70px;top:1226px;font-size:28.5px;line-height:28.5px;color:#101419;white-space:pre;font-weight:bold;letter-spacing:-3.159px;">VPC</span>
<span style="position:absolute;left:111.70px;top:1274px;font-size:23px;line-height:23px;color:#101419;white-space:pre;letter-spacing:-0.216px;">Your AWS virtual network</span>
<div style="position:absolute;left:112.10px;top:1331.80px;width:500.60px;height:49.60px;box-sizing:border-box;border:3px solid #dedee3;border-radius:12px;background:#fff"></div>
<span style="position:absolute;left:130.00px;top:1346px;font-size:23px;line-height:23px;color:#101419;white-space:pre;letter-spacing:-0.074px;">lab-vpc</span>
<div style="position:absolute;left:707.60px;top:1184.60px;width:563.70px;height:328.20px;box-sizing:border-box;border:1.6px solid #c6c6cc;border-radius:24px;background:#fff"></div>
<span style="position:absolute;left:739.00px;top:1226px;font-size:28.5px;line-height:28.5px;color:#101419;white-space:pre;font-weight:bold;letter-spacing:-1.363px;">Subnets</span>
<span style="position:absolute;left:847.00px;top:1226px;font-size:28.5px;line-height:28.5px;color:#101419;white-space:pre;letter-spacing:0.579px;">(2)</span>
<span style="position:absolute;left:738.00px;top:1274px;font-size:23px;line-height:23px;color:#101419;white-space:pre;letter-spacing:-0.366px;">Subnets within this VPC</span>
<span style="position:absolute;left:760.00px;top:1337px;font-size:21.8px;line-height:21.8px;color:#101419;white-space:pre;font-weight:bold;letter-spacing:-0.256px;">us-east-1a</span>
<div style="position:absolute;left:738.70px;top:1366.20px;width:500.70px;height:49.60px;box-sizing:border-box;border:3px solid #dedee3;border-radius:12px;background:#fff"></div>
<div style="position:absolute;left:738.70px;top:1425.80px;width:500.70px;height:49.60px;box-sizing:border-box;border:3px solid #dedee3;border-radius:12px;background:#fff"></div>
<div style="position:absolute;left:756.70px;top:1378.50px;width:25.30px;height:25.30px;background:#377e39;border-radius:50%"></div>
<span style="position:absolute;left:762.30px;top:1383px;font-size:17px;line-height:17px;color:#fff;white-space:pre;font-weight:bold;">A</span>
<div style="position:absolute;left:756.70px;top:1438.50px;width:25.30px;height:25.00px;background:#2d6ad8;border-radius:3px"></div>
<span style="position:absolute;left:762.30px;top:1443px;font-size:17px;line-height:17px;color:#fff;white-space:pre;font-weight:bold;">A</span>
<span style="position:absolute;left:794.30px;top:1380px;font-size:23px;line-height:23px;color:#101419;white-space:pre;letter-spacing:-0.107px;">lab-subnet-public1-us-east-1a</span>
<span style="position:absolute;left:794.30px;top:1439px;font-size:23px;line-height:23px;color:#101419;white-space:pre;letter-spacing:-0.108px;">lab-subnet-private1-us-east-1a</span>
<div style="position:absolute;left:1334.60px;top:1184.60px;width:563.70px;height:353.40px;box-sizing:border-box;border:1.6px solid #c6c6cc;border-radius:24px;background:#fff"></div>
<span style="position:absolute;left:1364.90px;top:1226px;font-size:28.5px;line-height:28.5px;color:#101419;white-space:pre;font-weight:bold;letter-spacing:-0.762px;">Route tables</span>
<span style="position:absolute;left:1532.00px;top:1226px;font-size:28.5px;line-height:28.5px;color:#101419;white-space:pre;letter-spacing:0.329px;">(3)</span>
<span style="position:absolute;left:1364.90px;top:1274px;font-size:23px;line-height:23px;color:#101419;white-space:pre;letter-spacing:-0.180px;">Route network traffic to resources</span>
<div style="position:absolute;left:1365.60px;top:1331.80px;width:500.90px;height:49.60px;box-sizing:border-box;border:3px solid #dedee3;border-radius:12px;background:#fff"></div>
<div style="position:absolute;left:1365.60px;top:1391.80px;width:500.90px;height:49.60px;box-sizing:border-box;border:3px solid #dedee3;border-radius:12px;background:#fff"></div>
<div style="position:absolute;left:1365.60px;top:1451.00px;width:500.90px;height:49.60px;box-sizing:border-box;border:3px solid #dedee3;border-radius:12px;background:#fff"></div>
<span style="position:absolute;left:1384.00px;top:1346px;font-size:23px;line-height:23px;color:#101419;white-space:pre;letter-spacing:-0.049px;">rtb-0213855c3cb408dea</span>
<span style="position:absolute;left:1384.00px;top:1405px;font-size:23px;line-height:23px;color:#101419;white-space:pre;letter-spacing:0.404px;">lab-rtb-public</span>
<span style="position:absolute;left:1384.00px;top:1465px;font-size:23px;line-height:23px;color:#101419;white-space:pre;letter-spacing:0.050px;">lab-rtb-private1-us-east-1a</span>
<div style="position:absolute;left:1961.40px;top:1184.60px;width:563.70px;height:293.40px;box-sizing:border-box;border:1.6px solid #c6c6cc;border-radius:24px;background:#fff"></div>
<span style="position:absolute;left:1991.90px;top:1226px;font-size:28.5px;line-height:28.5px;color:#101419;white-space:pre;font-weight:bold;letter-spacing:-0.616px;">Network Connections</span>
<span style="position:absolute;left:2278.00px;top:1226px;font-size:28.5px;line-height:28.5px;color:#101419;white-space:pre;letter-spacing:0.029px;">(2)</span>
<span style="position:absolute;left:1991.90px;top:1274px;font-size:23px;line-height:23px;color:#101419;white-space:pre;letter-spacing:-0.124px;">Connections to other networks</span>
<div style="position:absolute;left:1992.60px;top:1331.50px;width:501.00px;height:49.60px;box-sizing:border-box;border:3px solid #dedee3;border-radius:12px;background:#fff"></div>
<div style="position:absolute;left:1992.60px;top:1391.50px;width:501.00px;height:49.60px;box-sizing:border-box;border:3px solid #dedee3;border-radius:12px;background:#fff"></div>
<span style="position:absolute;left:2010.40px;top:1346px;font-size:23px;line-height:23px;color:#101419;white-space:pre;letter-spacing:0.224px;">lab-igw</span>
<span style="position:absolute;left:2010.40px;top:1405px;font-size:23px;line-height:23px;color:#101419;white-space:pre;letter-spacing:-0.032px;">lab-nat-public1-us-east-1a</span>
<svg style="position:absolute;left:0.00px;top:0.00px;pointer-events:none" width="2560" height="1665" viewBox="0 0 2560 1665"><path d="M1239 1393 H1276 C1301 1393 1302 1417 1327 1417 H1366" fill="none" stroke="#dcdce1" stroke-width="2.6"/><path d="M1239 1452.2 H1276 C1301 1452.2 1302 1477.4 1327 1477.4 H1366" fill="none" stroke="#dcdce1" stroke-width="2.6"/><path d="M1866 1416.5 H1905 Q1929 1416.5 1929 1396 V1377 Q1929 1356.7 1950 1356.7 H1993" fill="none" stroke="#dcdce1" stroke-width="2.6"/><path d="M1866 1476 H1905 Q1929 1476 1929 1455 V1437 Q1929 1416.5 1950 1416.5 H1993" fill="none" stroke="#dcdce1" stroke-width="2.6"/></svg>
<div style="position:absolute;left:7.00px;top:1604.00px;width:2546.00px;height:54.00px;background:#171d25;border-radius:0 0 12px 12px"></div>
<svg style="position:absolute;left:31.00px;top:1618.00px;" width="28" height="28" viewBox="0 0 28 28"><rect x="1.8" y="1.8" width="22.5" height="22.5" rx="4" fill="none" stroke="#e6e6ea" stroke-width="2.6"/><path d="M7 8 L12 12.5 L7 17" fill="none" stroke="#e6e6ea" stroke-width="2.6"/><path d="M13.5 18.5 H19" stroke="#e6e6ea" stroke-width="2.6"/></svg>
<span style="position:absolute;left:64.50px;top:1621px;font-size:20.5px;line-height:20.5px;color:#e6e6ea;white-space:pre;letter-spacing:-0.677px;">CloudShell</span>
<span style="position:absolute;left:195.60px;top:1621px;font-size:20.5px;line-height:20.5px;color:#e6e6ea;white-space:pre;letter-spacing:-1.483px;">Feedback</span>
<span style="position:absolute;left:1698.50px;top:1621px;font-size:20.5px;line-height:20.5px;color:#c6c6cc;white-space:pre;letter-spacing:-0.693px;">© 2025, Amazon Web Services, Inc. or its affiliates.</span>
<span style="position:absolute;left:2174.60px;top:1621px;font-size:20.5px;line-height:20.5px;color:#e6e6ea;white-space:pre;letter-spacing:-1.026px;">Privacy</span>
<span style="position:absolute;left:2275.00px;top:1621px;font-size:20.5px;line-height:20.5px;color:#e6e6ea;white-space:pre;letter-spacing:-1.139px;">Terms</span>
<span style="position:absolute;left:2365.60px;top:1621px;font-size:20.5px;line-height:20.5px;color:#e6e6ea;white-space:pre;letter-spacing:-0.889px;">Cookie preferences</span>
</div>
</body></html>
